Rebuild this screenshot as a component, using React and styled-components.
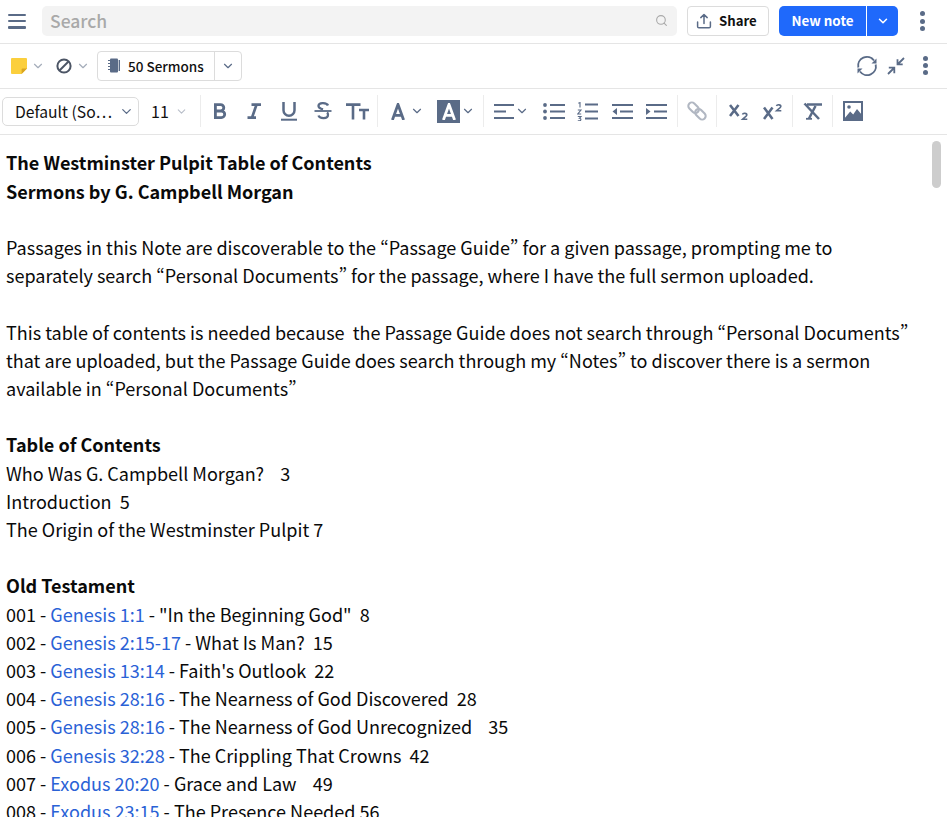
import React from "react";
import styled, { createGlobalStyle } from "styled-components";
import { ChevronDown, Search as SearchGlyph } from "lucide-react";

const FONT = `"Noto Sans CJK SC", "Noto Sans", sans-serif`;
const INK = "#5a6b87";

const Global = createGlobalStyle`
  html, body { margin: 0; padding: 0; height: 100%; overflow: hidden; background: #fff; }
  body { font-family: ${FONT}; color: #000; font-variant-east-asian: proportional-width; font-feature-settings: "pwid", "palt"; }
  #root { height: 100%; }
  * { box-sizing: border-box; }
`;

const Page = styled.div`display: flex; flex-direction: column; height: 100vh; position: relative; overflow: hidden;`;
const TopBar = styled.div`display: flex; align-items: center; height: 44px; padding: 0 0 1px 8px; border-bottom: 1px solid #e5e5e5; flex: none;`;
const Burger = styled.div`width: 18px; height: 15px; display: flex; flex-direction: column; justify-content: space-between; margin-right: 16px;`;
const BurgerBar = styled.span`display: block; height: 2.7px; border-radius: 1px; background: ${INK};`;
const SearchBox = styled.div`flex: none; width: 635px; height: 30px; background: #f3f3f3; border-radius: 5px; display: flex; align-items: center; justify-content: space-between; padding: 0 9px 2px 8px; font-size: 17.5px; font-weight: 500; color: #a9a9a9;`;
const ShareButton = styled.div`margin-left: 10px; width: 82px; height: 30px; border: 1px solid #dcdcdc; border-radius: 4px; display: flex; align-items: center; gap: 7px; padding-left: 8px; font-size: 13.2px; font-weight: 700; color: #111;`;
const ShareLabel = styled.span`position: relative; top: -1px;`;
const Split = styled.div`margin-left: 10px; width: 119px; height: 30px; display: flex; border-radius: 5px; background: #1f69fb; color: #fff; overflow: hidden;`;
const SplitMain = styled.div`width: 88px; display: flex; align-items: center; justify-content: center; padding-bottom: 2px; font-size: 13.4px; font-weight: 700; border-right: 1px solid #fff;`;
const SplitArrow = styled.div`flex: 1; display: flex; align-items: center; justify-content: center;`;
const Kebab = styled.div`display: flex; flex-direction: column; gap: 2.4px; margin-left: ${p => p.$left}px;`;
const Dot = styled.span`width: 5px; height: 5px; border-radius: 50%; background: ${INK};`;

const MetaBar = styled.div`display: flex; align-items: center; height: 45px; padding: 0 0 1px 11px; border-bottom: 1px solid #e5e5e5; flex: none;`;
const MetaTool = styled.div`display: flex; align-items: center; gap: ${p => p.$gap ?? 4}px; margin-right: ${p => p.$right ?? 0}px; color: #a5adba;`;
const NotebookGroup = styled.div`display: flex; width: 145px; height: 30px; border: 1px solid #dcdcdc; border-radius: 4px;`;
const NotebookName = styled.div`width: 117px; display: flex; align-items: center; gap: 8px; padding-left: 10px; font-size: 13.5px; font-weight: 500; color: #111; border-right: 1px solid #dcdcdc;`;
const NotebookArrow = styled.div`flex: 1; display: flex; align-items: center; justify-content: center; color: ${INK};`;
const Spacer = styled.div`flex: 1;`;
const RightIcons = styled.div`display: flex; align-items: center; gap: 9px; padding-right: 19px;`;

const FormatBar = styled.div`display: flex; align-items: center; height: 46px; padding: 0 0 1px 2px; border-bottom: 1px solid #e5e5e5; flex: none;`;
const FontSelect = styled.div`width: 137px; height: 29px; border: 1px solid #dcdcdc; border-radius: 5px; display: flex; align-items: center; justify-content: space-between; padding: 0 4px 0 12px; font-size: 15.7px; color: #111; margin-right: 12px;`;
const SizeSelect = styled.div`width: 46px; display: flex; align-items: center; justify-content: space-between; font-size: 16px; color: #111; padding-right: 9px;`;
const Divider = styled.div`width: 1px; height: 32px; background: #ececec; margin: 0 ${p => p.$r ?? 3}px 0 ${p => p.$l ?? 3}px; flex: none;`;
const Tool = styled.div`width: ${p => p.$w ?? 34.3}px; display: flex; align-items: center; justify-content: ${p => p.$start ? "flex-start" : "center"}; padding-left: ${p => p.$pad ?? 0}px; gap: ${p => p.$gap ?? 0}px; color: ${INK}; flex: none;`;
const BoxedA = styled.span`width: 23px; height: 23px; background: ${INK}; display: flex; align-items: center; justify-content: center;`;

const Doc = styled.div`flex: 1; padding: 13.35px 37px 0 6px; font-size: 18.04px; line-height: 28.2px; color: #0a0a0a; white-space: pre-wrap; overflow: hidden;`;
const Line = styled.div`min-height: 28.2px; font-weight: ${p => p.$bold ? 700 : 400};`;
const Ref = styled.span`color: #2a62d6;`;
const Thumb = styled.div`position: absolute; left: 932px; top: 141px; width: 9px; height: 47px; border-radius: 5px; background: #cdcdcd;`;

const Svg = ({ w = 22, h = 22, vb, children, ...rest }) => (
  <svg width={w} height={h} viewBox={vb || `0 0 ${w} ${h}`} fill="none" stroke="currentColor" strokeWidth="2.2" {...rest}>{children}</svg>
);
const Chev = ({ size = 14, sw = 2, color }) => <ChevronDown size={size} strokeWidth={sw} color={color || "currentColor"} />;

const ShareIcon = () => (
  <Svg w={16} h={16} stroke="#5a6b87" strokeWidth="1.5">
    <path d="M8 10.5V1.8M4.8 4.6 8 1.5l3.2 3.1M1.6 9v4.4a1.3 1.3 0 0 0 1.3 1.3h10.2a1.3 1.3 0 0 0 1.3-1.3V9" strokeLinecap="round" strokeLinejoin="round" />
  </Svg>
);
const StickyNote = () => (
  <svg width="16" height="16" viewBox="0 0 16 16">
    <path d="M1 0h14a1 1 0 0 1 1 1v9.5L10.5 16H1a1 1 0 0 1-1-1V1a1 1 0 0 1 1-1z" fill="#fbcf3d" />
    <path d="M16 10.5h-4.4a1 1 0 0 0-1 1V16z" fill="#d9a521" />
  </svg>
);
const BlockIcon = () => (
  <Svg w={16} h={16} stroke="#4c5565" strokeWidth="2">
    <circle cx="8" cy="8" r="6.6" /><path d="M3.5 12.5l9-9" />
  </Svg>
);
const NotebookIcon = () => (
  <svg width="12" height="15" viewBox="0 0 12 15" fill={INK}>
    <rect x="2" y="0.5" width="8" height="14" rx="1" />
    <rect x="10.6" y="2" width="1.4" height="11" />
    <path d="M0 2.5h3M0 5.5h3M0 8.5h3M0 11.5h3" stroke={INK} strokeWidth="1.2" />
  </svg>
);
const SyncIcon = () => (
  <svg width="22" height="22" viewBox="0 0 22 22" fill="none" stroke={INK} strokeWidth="1.9">
    <path d="M2.3 12.5A8.8 8.8 0 0 1 18 5.5" />
    <path d="M19.7 9.5A8.8 8.8 0 0 1 4 16.5" />
    <path d="M20.5 3.5v5h-5z" fill={INK} stroke="none" />
    <path d="M1.5 18.5v-5h5z" fill={INK} stroke="none" />
  </svg>
);
const CollapseIcon = () => (
  <svg width="18" height="18" viewBox="0 0 18 18" fill="none" stroke={INK} strokeWidth="1.8">
    <path d="M17 1l-6 6M10.5 2.2v5.2h5.2" />
    <path d="M1 17l6-6M1.8 10.6h5.5v5.6" />
  </svg>
);
const Bold = () => <Svg w={16} h={18} strokeWidth="2.8"><path d="M3.4 2.6v13M2 2.6h6.6a3.2 3.2 0 0 1 0 6.4H3.4h6a3.3 3.3 0 0 1 0 6.6H2" /></Svg>;
const Italic = () => <Svg w={16} h={18} strokeWidth="2.7"><path d="M5.5 2.6h9.5M1.5 15.6h8.5M10.5 2.6 6 15.6" /></Svg>;
const Underline = () => <Svg w={18} h={20} strokeWidth="2.5"><path d="M3.5 1v8.2a5.5 5.5 0 0 0 11 0V1" /><path d="M1 18.7h16" strokeWidth="2" /></Svg>;
const Strike = () => <Svg w={18} h={20} strokeWidth="2.3"><path d="M14 4.5C13 1.8 5 .8 4.5 4.6 4.2 7 7.5 8 9 8.5" /><path d="M4.5 14.5c1 3.3 9.5 3.8 9.5-.8 0-1-.4-1.8-1-2.2" /><path d="M0.5 10h17" strokeWidth="1.8" /></Svg>;
const TextSize = () => <Svg w={24} h={18} strokeWidth="2.6"><path d="M1 2.6h14.5M8 2.6V17.5" /><path d="M14 8h10M19 8v9.5" /></Svg>;
const LetterA = ({ stroke = INK }) => <Svg w={14} h={17} stroke={stroke} strokeWidth="2.8"><path d="M1.4 17 7 1.5 12.6 17M3 12.4h8" /></Svg>;
const AlignIcon = () => <Svg w={20} h={17} strokeWidth="2"><path d="M0 2h20M0 8.5h12M0 15h20" /></Svg>;
const Bullets = () => (
  <Svg w={22} h={17} strokeWidth="2">
    <path d="M7 2h15M7 8.5h15M7 15h15" />
    <g fill={INK} stroke="none"><circle cx="2" cy="2" r="1.9" /><circle cx="2" cy="8.5" r="1.9" /><circle cx="2" cy="15" r="1.9" /></g>
  </Svg>
);
const Numbers = () => (
  <Svg w={21} h={19} strokeWidth="2">
    <path d="M8 2.5h13M8 9.5h13M8 16.5h13" />
    <path d="M1.3 1.2 3 .6v5" strokeWidth="1.1" />
    <path d="M.8 8h3.2L.8 12h3.4" strokeWidth="1.1" />
    <path d="M.8 14.5h3.2l-1.6 1.8c2 0 2 2.5 0 2.5H.8" strokeWidth="1.1" />
  </Svg>
);
const Outdent = () => (
  <Svg w={21} h={17} strokeWidth="2">
    <path d="M0 2h21M8 8.5h13M0 15h21" /><path d="M5 5v7L.5 8.5z" fill={INK} stroke="none" />
  </Svg>
);
const Indent = () => (
  <Svg w={21} h={17} strokeWidth="2">
    <path d="M0 2h21M8 8.5h13M0 15h21" /><path d="M0 5v7l4.5-3.5z" fill={INK} stroke="none" />
  </Svg>
);
const LinkIcon = () => (
  <svg width="20" height="20" viewBox="0 0 20 20" fill="none" stroke="#b1b7c2" strokeWidth="2.1">
    <rect x="0.6" y="3.2" width="12" height="7" rx="3.5" transform="rotate(45 6.6 6.7)" />
    <rect x="7.4" y="9.8" width="12" height="7" rx="3.5" transform="rotate(45 13.4 13.3)" />
  </svg>
);
const Subscript = () => <Svg w={20} h={17} strokeWidth="2.6"><path d="M1 2l8.5 11M9.5 2 1 13" /><path d="M13.5 11.5c.5-1.8 4.5-1.5 4.3.6-.1 1.3-2.8 2.6-4.3 4.1h4.8" strokeWidth="1.6" /></Svg>;
const Superscript = () => <Svg w={20} h={17} strokeWidth="2.6"><path d="M1 4.5l8.5 11.5M9.5 4.5 1 16" /><path d="M13.5 3c.5-1.8 4.5-1.5 4.3.6-.1 1.3-2.8 2.6-4.3 4.1h4.8" strokeWidth="1.6" /></Svg>;
const ClearFormat = () => <Svg w={20} h={18} strokeWidth="2.5"><path d="M4 2.5h15" /><path d="M1.5 1.5 16 17" /><path d="M12.5 4 6 16.5" /><path d="M3 16.8h6" strokeWidth="1.8" /></Svg>;
const ImageIcon = () => (
  <svg width="20" height="20" viewBox="0 0 20 20">
    <rect x="1" y="1" width="18" height="18" fill="none" stroke={INK} strokeWidth="2" />
    <circle cx="6" cy="6" r="1.8" fill={INK} />
    <path d="M1 18 7.2 10.5l3 3L14 8l5 6v5H1z" fill={INK} />
  </svg>
);

const doc = [
  [["b", "The Westminster Pulpit Table of Contents"]],
  [["b", "Sermons by G. Campbell Morgan"]],
  [],
  [["t", "Passages in this Note are discoverable to the “Passage Guide” for a given passage, prompting me to separately search “Personal Documents” for the passage, where I have the full sermon uploaded."]],
  [],
  [["t", "This table of contents is needed because  the Passage Guide does not search through “Personal Documents” that are uploaded, but the Passage Guide does search through my “Notes” to discover there is a sermon available in “Personal Documents”"]],
  [],
  [["b", "Table of Contents"]],
  [["t", "Who Was G. Campbell Morgan?    3"]],
  [["t", "Introduction  5"]],
  [["t", "The Origin of the Westminster Pulpit 7"]],
  [],
  [["b", "Old Testament"]],
  [["t", "001 - "], ["r", "Genesis 1:1"], ["t", " - \"In the Beginning God\"  8"]],
  [["t", "002 - "], ["r", "Genesis 2:15-17"], ["t", " - What Is Man?  15"]],
  [["t", "003 - "], ["r", "Genesis 13:14"], ["t", " - Faith's Outlook  22"]],
  [["t", "004 - "], ["r", "Genesis 28:16"], ["t", " - The Nearness of God Discovered  28"]],
  [["t", "005 - "], ["r", "Genesis 28:16"], ["t", " - The Nearness of God Unrecognized    35"]],
  [["t", "006 - "], ["r", "Genesis 32:28"], ["t", " - The Crippling That Crowns  42"]],
  [["t", "007 - "], ["r", "Exodus 20:20"], ["t", " - Grace and Law    49"]],
  [["t", "008 - "], ["r", "Exodus 23:15"], ["t", " - The Presence Needed 56"]],
];

export default function App() {
  return (
    <Page lang="en">
      <Global />
      <TopBar>
        <Burger><BurgerBar /><BurgerBar /><BurgerBar /></Burger>
        <SearchBox>
          <span>Search</span>
          <SearchGlyph size={13} strokeWidth={2} color="#a9a9a9" />
        </SearchBox>
        <ShareButton><ShareIcon /><ShareLabel>Share</ShareLabel></ShareButton>
        <Split>
          <SplitMain>New note</SplitMain>
          <SplitArrow><Chev size={14} sw={2.6} /></SplitArrow>
        </Split>
        <Kebab $left={22}><Dot /><Dot /><Dot /></Kebab>
      </TopBar>
      <MetaBar>
        <MetaTool $right={11}><StickyNote /><Chev size={14} /></MetaTool>
        <MetaTool $right={7}><BlockIcon /><Chev size={14} /></MetaTool>
        <NotebookGroup>
          <NotebookName><NotebookIcon />50 Sermons</NotebookName>
          <NotebookArrow><Chev size={14} /></NotebookArrow>
        </NotebookGroup>
        <Spacer />
        <RightIcons>
          <SyncIcon /><CollapseIcon />
          <Kebab $left={9}><Dot /><Dot /><Dot /></Kebab>
        </RightIcons>
      </MetaBar>
      <FormatBar>
        <FontSelect>Default (So…<Chev size={15} color={INK} /></FontSelect>
        <SizeSelect>11<Chev size={13} color="#b8bec9" /></SizeSelect>
        <Divider $r={2} />
        <Tool><Bold /></Tool><Tool><Italic /></Tool><Tool><Underline /></Tool><Tool><Strike /></Tool><Tool><TextSize /></Tool>
        <Divider $l={3} $r={13} />
        <Tool $w={43} $start $gap={5}><LetterA /><Chev size={14} /></Tool>
        <Tool $w={50} $start $pad={3} $gap={1}><BoxedA><LetterA stroke="#fff" /></BoxedA><Chev size={14} /></Tool>
        <Divider $l={-1} $r={10} />
        <Tool $w={42} $start $gap={1}><AlignIcon /><Chev size={14} /></Tool>
        <Tool><Bullets /></Tool><Tool><Numbers /></Tool><Tool><Outdent /></Tool><Tool><Indent /></Tool>
        <Divider /><Tool $w={32}><LinkIcon /></Tool><Divider $r={5} />
        <Tool><Subscript /></Tool><Tool><Superscript /></Tool>
        <Divider $l={2} /><Tool $w={33.3}><ClearFormat /></Tool><Divider $l={2} $r={3} />
        <Tool><ImageIcon /></Tool>
      </FormatBar>
      <Doc>
        {doc.map((runs, i) => (
          <Line key={i} $bold={runs[0]?.[0] === "b"}>
            {runs.map(([k, s], j) => k === "r" ? <Ref key={j}>{s}</Ref> : <React.Fragment key={j}>{s}</React.Fragment>)}
          </Line>
        ))}
      </Doc>
      <Thumb />
    </Page>
  );
}
